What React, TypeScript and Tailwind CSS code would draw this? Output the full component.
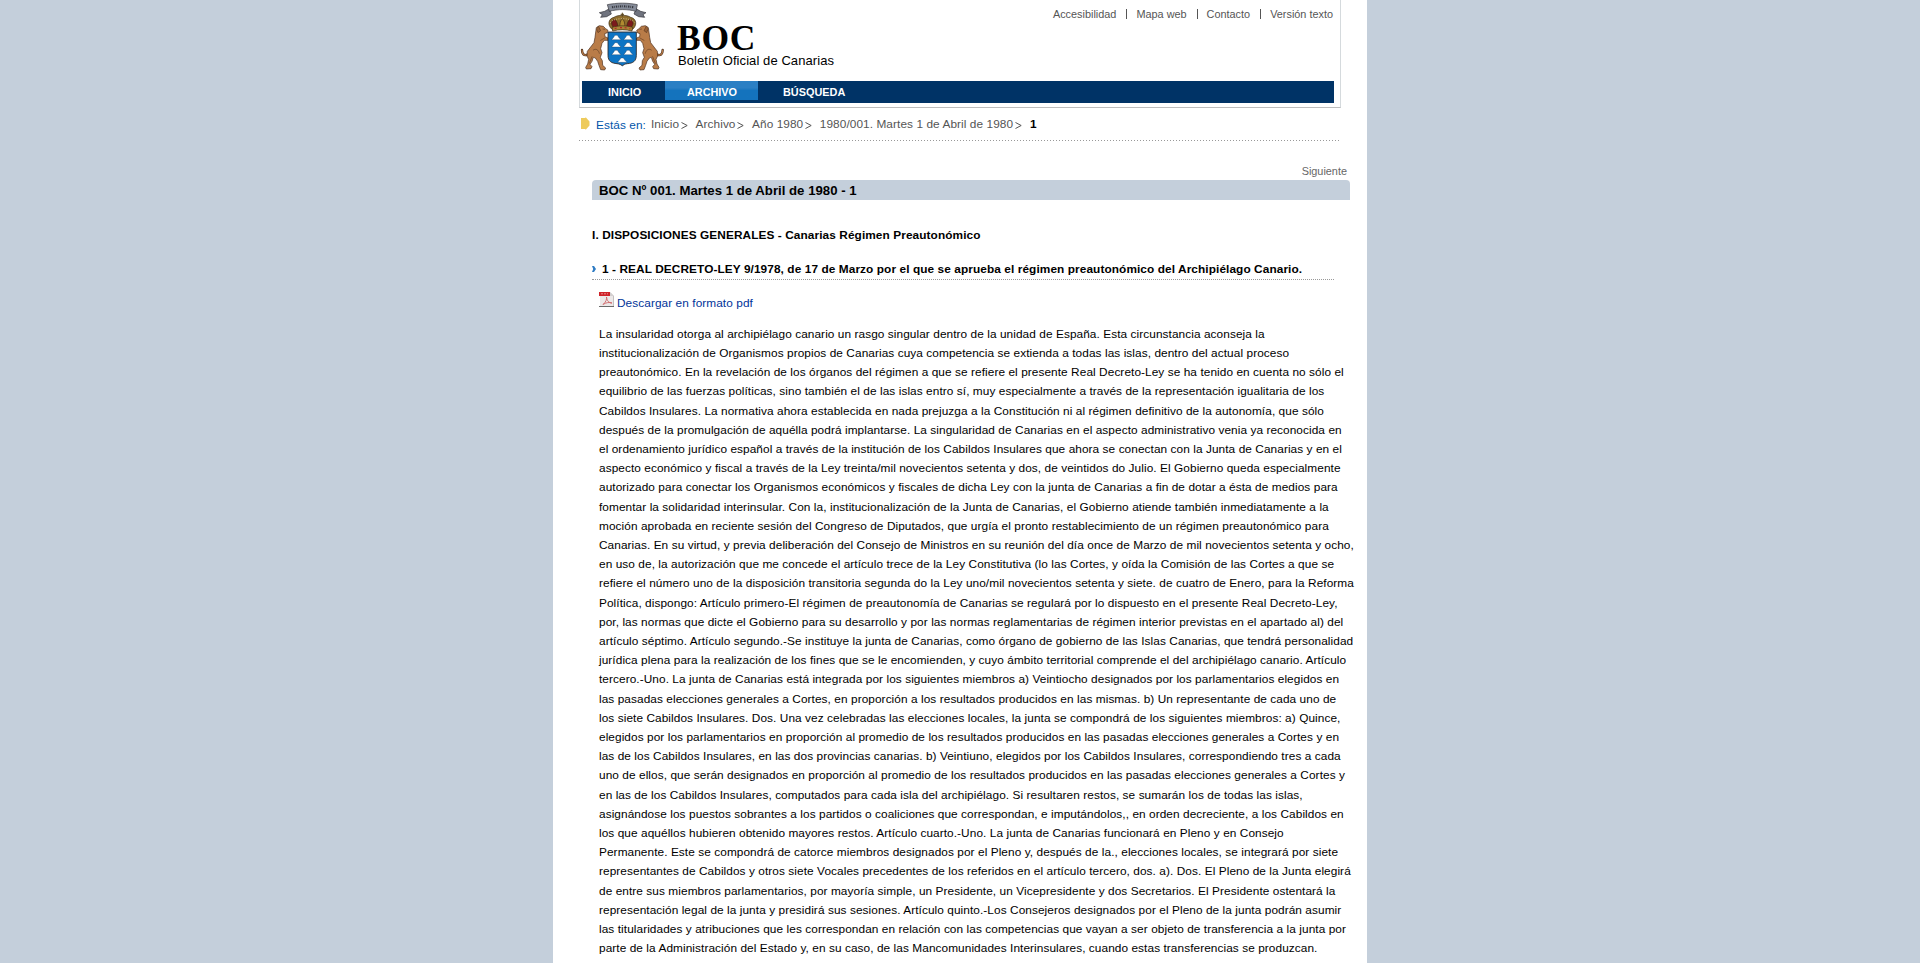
import { Fragment } from "react";

const topLinks = ["Accesibilidad", "Mapa web", "Contacto", "Versión texto"];

const crumbs = ["Inicio", "Archivo", "Año 1980", "1980/001. Martes 1 de Abril de 1980"];

const bodyLines = [
  "La insularidad otorga al archipiélago canario un rasgo singular dentro de la unidad de España. Esta circunstancia aconseja la",
  "institucionalización de Organismos propios de Canarias cuya competencia se extienda a todas las islas, dentro del actual proceso",
  "preautonómico. En la revelación de los órganos del régimen a que se refiere el presente Real Decreto-Ley se ha tenido en cuenta no sólo el",
  "equilibrio de las fuerzas políticas, sino también el de las islas entro sí, muy especialmente a través de la representación igualitaria de los",
  "Cabildos Insulares. La normativa ahora establecida en nada prejuzga a la Constitución ni al régimen definitivo de la autonomía, que sólo",
  "después de la promulgación de aquélla podrá implantarse. La singularidad de Canarias en el aspecto administrativo venia ya reconocida en",
  "el ordenamiento jurídico español a través de la institución de los Cabildos Insulares que ahora se conectan con la Junta de Canarias y en el",
  "aspecto económico y fiscal a través de la Ley treinta/mil novecientos setenta y dos, de veintidos do Julio. El Gobierno queda especialmente",
  "autorizado para conectar los Organismos económicos y fiscales de dicha Ley con la junta de Canarias a fin de dotar a ésta de medios para",
  "fomentar la solidaridad interinsular. Con la, institucionalización de la Junta de Canarias, el Gobierno atiende también inmediatamente a la",
  "moción aprobada en reciente sesión del Congreso de Diputados, que urgía el pronto restablecimiento de un régimen preautonómico para",
  "Canarias. En su virtud, y previa deliberación del Consejo de Ministros en su reunión del día once de Marzo de mil novecientos setenta y ocho,",
  "en uso de, la autorización que me concede el artículo trece de la Ley Constitutiva (lo las Cortes, y oída la Comisión de las Cortes a que se",
  "refiere el número uno de la disposición transitoria segunda do la Ley uno/mil novecientos setenta y siete. de cuatro de Enero, para la Reforma",
  "Política, dispongo: Artículo primero-El régimen de preautonomía de Canarias se regulará por lo dispuesto en el presente Real Decreto-Ley,",
  "por, las normas que dicte el Gobierno para su desarrollo y por las normas reglamentarias de régimen interior previstas en el apartado al) del",
  "artículo séptimo. Artículo segundo.-Se instituye la junta de Canarias, como órgano de gobierno de las Islas Canarias, que tendrá personalidad",
  "jurídica plena para la realización de los fines que se le encomienden, y cuyo ámbito territorial comprende el del archipiélago canario. Artículo",
  "tercero.-Uno. La junta de Canarias está integrada por los siguientes miembros a) Veintiocho designados por los parlamentarios elegidos en",
  "las pasadas elecciones generales a Cortes, en proporción a los resultados producidos en las mismas. b) Un representante de cada uno de",
  "los siete Cabildos Insulares. Dos. Una vez celebradas las elecciones locales, la junta se compondrá de los siguientes miembros: a) Quince,",
  "elegidos por los parlamentarios en proporción al promedio de los resultados producidos en las pasadas elecciones generales a Cortes y en",
  "las de los Cabildos Insulares, en las dos provincias canarias. b) Veintiuno, elegidos por los Cabildos Insulares, correspondiendo tres a cada",
  "uno de ellos, que serán designados en proporción al promedio de los resultados producidos en las pasadas elecciones generales a Cortes y",
  "en las de los Cabildos Insulares, computados para cada isla del archipiélago. Si resultaren restos, se sumarán los de todas las islas,",
  "asignándose los puestos sobrantes a los partidos o coaliciones que correspondan, e imputándolos,, en orden decreciente, a los Cabildos en",
  "los que aquéllos hubieren obtenido mayores restos. Artículo cuarto.-Uno. La junta de Canarias funcionará en Pleno y en Consejo",
  "Permanente. Este se compondrá de catorce miembros designados por el Pleno y, después de la., elecciones locales, se integrará por siete",
  "representantes de Cabildos y otros siete Vocales precedentes de los referidos en el artículo tercero, dos. a). Dos. El Pleno de la Junta elegirá",
  "de entre sus miembros parlamentarios, por mayoría simple, un Presidente, un Vicepresidente y dos Secretarios. El Presidente ostentará la",
  "representación legal de la junta y presidirá sus sesiones. Artículo quinto.-Los Consejeros designados por el Pleno de la junta podrán asumir",
  "las titularidades y atribuciones que les correspondan en relación con las competencias que vayan a ser objeto de transferencia a la junta por",
  "parte de la Administración del Estado y, en su caso, de las Mancomunidades Interinsulares, cuando estas transferencias se produzcan.",
];

function Dog() {
  return (
    <g stroke="#4a2e1c" strokeWidth="2" strokeLinejoin="round" strokeLinecap="round">
      <path d="M52 164C42 168 36 162 36 150" fill="none" strokeWidth="7" />
      <path d="M52 164C42 168 36 162 36 150" fill="none" stroke="#b97c48" strokeWidth="3.5" />
      <path
        d="M80 82L88 77L100 79L107 86L114 91L112 98L104 101L105 110L114 114L115 121L103 121L96 130L92 146L96 158L91 172L97 182L98 196L107 204L104 210L92 209L87 196L83 184L76 174L70 172L66 184L60 193L66 200L63 206L49 207L47 202L53 192L56 178L51 168L52 154L62 141L72 128L75 112L77 97Z"
        fill="#b97c48"
      />
      <path d="M86 80L92 92L84 98L80 88Z" fill="#9a6236" strokeWidth="1.5" />
      <path d="M99 87L104 88M92 121L104 114M70 150C78 144 86 150 88 160M66 170L58 190" fill="none" strokeWidth="1.5" />
    </g>
  );
}

function Crest() {
  return (
    <svg viewBox="30 6 261 216" className="h-[72px] w-[87px] shrink-0" aria-hidden="true">
      <Dog />
      <g transform="matrix(-1 0 0 1 314 0)">
        <Dog />
      </g>
      <g stroke="#33343a" strokeWidth="2" strokeLinejoin="round">
        <path d="M88 38L104 34L118 26L124 42L110 50L92 52L97 44Z" fill="#70747f" />
        <path d="M228 38L212 34L198 26L192 42L206 50L224 52L219 44Z" fill="#70747f" />
        <path d="M112 14C140 8 174 8 202 14L198 34C172 27 144 27 118 34Z" fill="#858b98" />
      </g>
      <path d="M126 22C146 18 170 18 190 22" fill="none" stroke="#34363d" strokeWidth="6" strokeDasharray="4 3 2 3" />
      <g stroke="#3c2a14" strokeWidth="2">
        <path d="M126 88C112 76 114 56 132 52C142 44 172 44 182 52C200 56 202 76 188 88Z" fill="#8f6d2c" />
        <path d="M132 84C122 74 122 62 134 58C142 64 144 76 144 84ZM182 84C192 74 192 62 180 58C172 64 170 76 170 84Z" fill="#7c1a1c" />
        <path d="M150 84C148 70 152 60 157 56C162 60 166 70 164 84Z" fill="#b08a30" />
        <path d="M126 82C146 76 168 76 188 82L186 93C166 88 148 88 128 93Z" fill="#a98437" />
      </g>
      <path d="M157 38V50M152 43H162" stroke="#5b451b" strokeWidth="3" />
      <path d="M121 68C128 52 186 52 193 68" fill="none" stroke="#e0cf98" strokeWidth="2.5" strokeDasharray="3 4" />
      <path d="M134 86L140 84M150 83H156M164 83L170 84M178 86L181 87" stroke="#b3262a" strokeWidth="3.5" />
      <path d="M114 96H199V166C199 184 188 190 172 191C164 192 160 194 157 198C153 194 149 192 141 191C125 190 114 184 114 166Z" fill="#0d74c4" stroke="#2c2320" strokeWidth="2.5" />
      <g fill="#ffffff" stroke="#1f3550" strokeWidth="1">
        {[
          [139, 119],
          [175, 119],
          [139, 141],
          [175, 141],
          [139, 164],
          [175, 164],
          [157, 187],
        ].map(([x, y]) => (
          <path key={`${x}-${y}`} transform={`translate(${x} ${y})`} d="M-14 0L-9 -6L-4 -13H3L8 -6L14 0Z" />
        ))}
      </g>
    </svg>
  );
}

function PdfIcon() {
  return (
    <svg viewBox="0 0 15 15" className="h-[15px] w-[15px] shrink-0" aria-hidden="true">
      <path d="M1 1H11L14.5 4V14H1Z" fill="#ece8e8" />
      <path d="M11 0.5L14.5 4V14" fill="none" stroke="#c4c0c0" />
      <path d="M0 0H11V4H0Z" fill="#cf2228" />
      <path d="M2 1.8H9" stroke="#e58a8c" strokeDasharray="2 1" />
      <path d="M11 0V4H14.5Z" fill="#d4cfcf" />
      <path d="M4 12.5C7 10 8 7 7.5 5C8 9 10 11 13 11C10 10 7 10.5 4 12.5Z" fill="none" stroke="#cf6467" strokeWidth="0.9" />
      <path d="M0 14.5H15" stroke="#6a6a6a" />
    </svg>
  );
}

function CrumbArrow() {
  return (
    <svg viewBox="0 0 7 7" className="mt-[5px] h-[7px] w-[7px] shrink-0" aria-hidden="true">
      <path d="M0.5 0.5L6.2 3.5L0.5 6.5" fill="none" stroke="#555555" strokeWidth="1" />
    </svg>
  );
}

export default function App() {
  return (
    <div className="h-[963px] overflow-hidden bg-[#c4cfdb] font-['Liberation_Sans',Arial,sans-serif] text-[11.84px] tracking-[0.075px] text-black [font-feature-settings:'liga'_1]">
      <div className="mx-auto h-full w-[814px] overflow-hidden bg-white pl-[26px]">
        <header className="flex h-[108px] w-[762px] flex-col border-x border-b border-x-[#d5dadd] border-b-[#bdbdbd] tracking-normal">
          <div className="flex h-[81px] justify-between">
            <div className="flex pt-[2px]">
              <Crest />
              <div className="flex flex-col pt-[21px] pl-[10px] whitespace-nowrap">
                <span className="font-['Liberation_Serif',serif] text-[35.5px] leading-[30px] font-bold tracking-[0.7px]">BOC</span>
                <span className="ml-px text-[13px] leading-[15px] tracking-[0.08px]">Boletín Oficial de Canarias</span>
              </div>
            </div>
            <nav className="mr-[7px] flex pt-[8px] text-[10.88px] leading-[12px] text-[#555555]">
              {topLinks.map((link, i) => (
                <Fragment key={link}>
                  {i > 0 && <span className="mt-px mr-[9px] ml-[10px] h-[10px] w-px bg-[#555555]" />}
                  <a>{link}</a>
                </Fragment>
              ))}
            </nav>
          </div>
          <nav className="ml-[2px] flex h-[22px] w-[752px] bg-[#003366] text-[10.88px] leading-[12px] font-bold text-white">
            <a className="w-[83px] pt-[5px] pl-[26px]">INICIO</a>
            <a className="h-[19px] w-[93px] bg-linear-to-b from-[#2b7fc4] from-35% to-[#1473bd] to-50% pt-[5px] pl-px text-center">ARCHIVO</a>
            <a className="pt-[5px] pl-[25px]">BÚSQUEDA</a>
          </nav>
        </header>

        <div className="flex h-[32px] w-[762px] pt-[9px] leading-[14px] text-[#555555]">
          <svg viewBox="0 0 9 13" className="ml-[2px] h-[13px] w-[9px] shrink-0" aria-hidden="true">
            <path d="M0 1H4.5V0L8.5 4.5V8.5L4.5 13V12H0Z" fill="#eecb5c" />
          </svg>
          <span className="mt-px ml-[6px] w-[55px] text-[#0055aa]">Estás en:</span>
          {crumbs.map((crumb) => (
            <span key={crumb} className="mr-[8px] flex gap-[1.5px] whitespace-nowrap">
              <a>{crumb}</a>
              <CrumbArrow />
            </span>
          ))}
          <strong className="ml-[0.5px] text-black">1</strong>
        </div>
        <div className="h-px w-[761px] bg-[repeating-linear-gradient(90deg,#999999_0_1px,transparent_1px_3px)]" />

        <main className="w-[775px] pl-[13px]">
          <div className="mt-[24px] flex h-[15px] w-[755px] justify-end text-[10.88px] leading-[12px] tracking-normal text-[#666666]">
            <a>Siguiente</a>
          </div>
          <h1 className="h-[20px] w-[758px] rounded-t-[4px] bg-[#c4cfdb] pt-[3px] pl-[7px] text-[13.2px] leading-[15px] font-bold tracking-[0.01px]">
            BOC Nº 001. Martes 1 de Abril de 1980 - 1
          </h1>
          <h2 className="mt-[28px] leading-[14px] font-bold tracking-[0.09px]">I. DISPOSICIONES GENERALES - Canarias Régimen Preautonómico</h2>
          <div className="mt-[20px] flex h-[18px] w-[742px] border-b border-dotted border-[#999999] leading-[14px]">
            <svg viewBox="0 0 4 6" className="mt-[4px] h-[6px] w-[4px] shrink-0" aria-hidden="true">
              <path d="M0 0H2L4 3L2 6H0L1.2 3Z" fill="#2f7cc4" />
            </svg>
            <h3 className="ml-[6px] font-bold tracking-[0.09px] whitespace-nowrap">
              1 - REAL DECRETO-LEY 9/1978, de 17 de Marzo por el que se aprueba el régimen preautonómico del Archipiélago Canario.
            </h3>
          </div>
          <a className="mt-[12px] ml-[7px] flex h-[18px] leading-[14px] text-[#003399]">
            <PdfIcon />
            <span className="mt-[4px] ml-[3px]">Descargar en formato pdf</span>
          </a>
          <p className="mt-[14.8px] ml-[7px] leading-[19.2px] whitespace-nowrap">
            {bodyLines.map((line) => (
              <Fragment key={line}>
                {line}
                <br />
              </Fragment>
            ))}
          </p>
        </main>
      </div>
    </div>
  );
}
